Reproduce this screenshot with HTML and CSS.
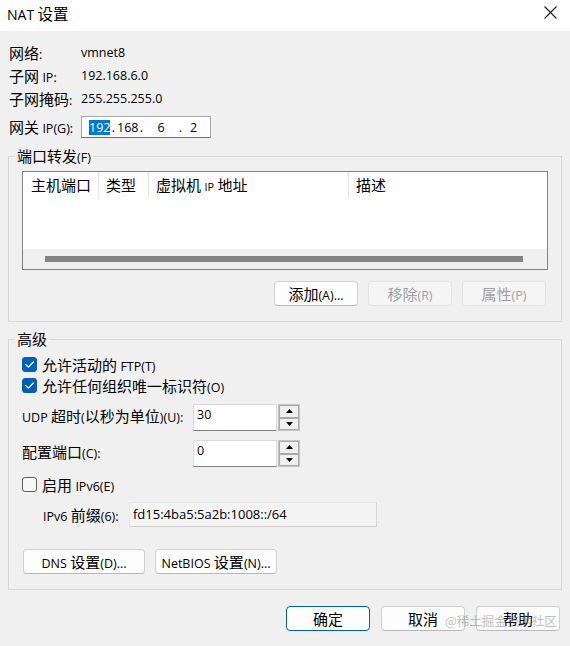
FILE: index.html
```html
<!DOCTYPE html>
<html lang="zh-CN">
<head>
<meta charset="utf-8">
<title>NAT 设置</title>
<link rel="stylesheet" href="styles.css">
</head>
<body>
<div class="window">
  <div class="titlebar">
    <div class="title"><span class="l tl">NAT</span> 设置</div>
    <svg class="close" width="13" height="13" viewBox="0 0 13 13"><path d="M0.5 0.5L12.5 12.5M12.5 0.5L0.5 12.5" stroke="#1a1a1a" stroke-width="1.1" fill="none"/></svg>
  </div>

  <div class="content">
    <div class="info">
      <div class="lab">网络<span class="l">:</span></div><div class="val l">vmnet8</div>
      <div class="lab">子网 <span class="l">IP:</span></div><div class="val l">192.168.6.0</div>
      <div class="lab">子网掩码<span class="l">:</span></div><div class="val l">255.255.255.0</div>
      <div class="lab ipl">网关 <span class="l">IP(G):</span></div>
      <div class="ipbox l">
        <span class="f1"><span class="sel">192</span></span><span class="dot">.</span><span class="f2">168</span><span class="dot">.</span><span class="f3">6</span><span class="dot">.</span><span class="f4">2</span>
      </div>
    </div>

    <fieldset class="group g1">
      <legend>端口转发<span class="l">(F)</span></legend>
      <div class="list">
        <div class="lhead">
          <div class="col c1">主机端口</div>
          <div class="col c2">类型</div>
          <div class="col c3">虚拟机 <span class="l ip">IP</span> 地址</div>
          <div class="col c4">描述</div>
        </div>
        <div class="lbody"></div>
        <div class="hscroll"><div class="thumb"></div></div>
      </div>
      <div class="btnrow">
        <div class="btn"><span>添加<span class="l">(A)...</span></span></div>
        <div class="btn dis"><span>移除<span class="l">(R)</span></span></div>
        <div class="btn dis"><span>属性<span class="l">(P)</span></span></div>
      </div>
    </fieldset>

    <fieldset class="group g2">
      <legend>高级</legend>
      <div class="chk first">
        <span class="cb on"><svg width="15" height="15" viewBox="0 0 15 15"><path d="M3.8 7.6L6.4 10.1L11.3 5" stroke="#fff" stroke-width="1.3" fill="none" stroke-linecap="round" stroke-linejoin="round"/></svg></span>
        <span>允许活动的 <span class="l">FTP(T)</span></span>
      </div>
      <div class="chk">
        <span class="cb on"><svg width="15" height="15" viewBox="0 0 15 15"><path d="M3.8 7.6L6.4 10.1L11.3 5" stroke="#fff" stroke-width="1.3" fill="none" stroke-linecap="round" stroke-linejoin="round"/></svg></span>
        <span>允许任何组织唯一标识符<span class="l">(O)</span></span>
      </div>

      <div class="frow udp">
        <div class="flbl"><span class="l">UDP</span> 超时<span class="l">(</span>以秒为单位<span class="l">)(U):</span></div>
        <div class="tbox l">30</div>
        <div class="spin">
          <div class="sbtn"><svg width="7" height="4" viewBox="0 0 7 4"><path d="M0 4L3.5 0L7 4Z" fill="#000"/></svg></div>
          <div class="sbtn"><svg width="7" height="4" viewBox="0 0 7 4"><path d="M0 0L3.5 4L7 0Z" fill="#000"/></svg></div>
        </div>
      </div>
      <div class="frow port">
        <div class="flbl">配置端口<span class="l">(C):</span></div>
        <div class="tbox l">0</div>
        <div class="spin">
          <div class="sbtn"><svg width="7" height="4" viewBox="0 0 7 4"><path d="M0 4L3.5 0L7 4Z" fill="#000"/></svg></div>
          <div class="sbtn"><svg width="7" height="4" viewBox="0 0 7 4"><path d="M0 0L3.5 4L7 0Z" fill="#000"/></svg></div>
        </div>
      </div>

      <div class="chk v6">
        <span class="cb"></span>
        <span>启用 <span class="l">IPv6(E)</span></span>
      </div>
      <div class="prow">
        <div class="plbl"><span class="l">IPv6</span> 前缀<span class="l">(6):</span></div>
        <div class="pbox l">fd15:4ba5:5a2b:1008::/64</div>
      </div>

      <div class="btnrow2">
        <div class="btn wide"><span><span class="l">DNS</span> 设置<span class="l">(D)...</span></span></div>
        <div class="btn wide"><span><span class="l">NetBIOS</span> 设置<span class="l">(N)...</span></span></div>
      </div>
    </fieldset>

    <div class="footer">
      <div class="btn def">确定</div>
      <div class="btn">取消</div>
      <div class="btn">帮助</div>
    </div>
  </div>

  <div class="watermark">@稀土掘金技术社区</div>
</div>
</body>
</html>
```

FILE: styles.css
```css
* { box-sizing: border-box; }
html, body { margin: 0; padding: 0; }
body {
  width: 570px;
  height: 646px;
  overflow: hidden;
  background: #f0f0f0;
  font-family: "Noto Sans CJK SC", sans-serif;
  font-size: 15px;
  color: #000;
}
.l {
  font-family: "Open Sans", "Noto Sans CJK SC", sans-serif;
  font-size: 12.5px;
  line-height: 1;
}
.window {
  position: relative;
  width: 570px;
  height: 646px;
  background: #f0f0f0;
}
.titlebar {
  height: 31px;
  background: #fff;
  display: flex;
  justify-content: space-between;
  align-items: flex-start;
  padding: 0 13px 0 7px;
}
.title {
  margin-top: 3px;
  line-height: 20px;
  height: 20px;
  font-size: 15.5px;
}
.title .tl { font-size: 14px; }
.close { margin-top: 6px; display: block; }

.content { padding: 10px 8px 0 8px; }

.info {
  display: grid;
  grid-template-columns: 72px auto;
  grid-template-rows: 23px 23px 23px 28px;
  align-items: center;
  padding-left: 1px;
  line-height: 20px;
}
.info .val { line-height: 20px; }
.ipl { align-self: end; line-height: 22px; height: 22px; }
.ipbox {
  align-self: end;
  width: 130px;
  height: 22px;
  background: #fff;
  border: 1px solid #a8a8a8;
  border-bottom-color: #6f6f6f;
  display: flex;
  align-items: center;
  padding-left: 7px;
  white-space: pre;
  line-height: 15px;
}
.ipbox .f1, .ipbox .f2 { width: 21px; display: inline-block; }
.ipbox .dot { width: 7px; text-align: center; display: inline-block; }
.ipbox .f3 { width: 32px; text-align: center; display: inline-block; }
.ipbox .f4 { padding-left: 6px; display: inline-block; }
.sel { background: #0078d7; color: #fff; display: inline-block; width: 21px; }

.group {
  margin: 9px 0 0 0;
  padding: 0 13px 15px 13px;
  border: 1px solid #d9d9d9;
  min-width: 0;
}
.group legend {
  margin-left: -7px;
  padding: 0 2px;
  line-height: 18px;
  height: 18px;
  font-size: 15px;
}
.g2 { margin-top: 8px; }

.list {
  margin-top: 6px;
  border: 1px solid #828282;
  background: #fff;
  height: 99px;
  display: flex;
  flex-direction: column;
}
.lhead {
  height: 27px;
  display: flex;
  line-height: 26px;
}
.col {
  padding-left: 7px;
  border-right: 1px solid #e5e5e5;
  white-space: nowrap;
  height: 26px;
}
.col.c1 { width: 76px; padding-left: 8px; }
.col.c2 { width: 50px; }
.col.c3 { width: 200px; }
.col.c4 { flex: 1; border-right: none; }
.col .ip { font-size: 11px; }
.lbody { flex: 1; }
.hscroll {
  height: 20px;
  background: #f0f0f0;
  padding: 7px 24px 0 22px;
}
.thumb { height: 6px; background: #858585; }

.btn {
  width: 84px;
  height: 25px;
  background: #fdfdfd;
  border: 1px solid #d0d0d0;
  border-bottom-color: #b8b8b8;
  border-radius: 4px;
  display: flex;
  align-items: center;
  justify-content: center;
  line-height: 20px;
  white-space: nowrap;
}
.btn.dis {
  background: #f5f5f5;
  border-color: #e3e3e3;
  color: #a0a0a0;
}
.btn.def { border: 1px solid #005fb8; }
.btnrow {
  display: flex;
  justify-content: flex-end;
  gap: 10px;
  margin-top: 11px;
  margin-right: 2px;
}

.chk {
  display: flex;
  align-items: center;
  gap: 5px;
  height: 21px;
  line-height: 20px;
}
.chk.first { margin-top: 6px; }
.chk.v6 { margin-top: 7px; }
.cb {
  width: 15px;
  height: 15px;
  border-radius: 3px;
  border: 1px solid #5f5f5f;
  background: #f7f7f7;
  display: block;
}
.cb.on { background: #005fb8; border-color: #005fb8; }
.cb.on svg { display: block; margin: -1px; }

.frow {
  display: flex;
  align-items: center;
  height: 27px;
  line-height: 20px;
}
.frow.udp { margin-top: 8px; }
.frow.port { margin-top: 9px; }
.flbl { width: 171px; white-space: nowrap; margin-top: -3px; }
.tbox {
  width: 84px;
  height: 27px;
  background: #fff;
  border: 1px solid #dadada;
  border-bottom-color: #7f7f7f;
  padding: 1px 0 0 3px;
  line-height: 18px;
  font-size: 12.5px;
}
.spin {
  width: 22px;
  height: 27px;
  margin-left: 1px;
  display: flex;
  flex-direction: column;
  border: 1px solid #c4c4c4;
  background: #f0f0f0;
}
.sbtn {
  flex: 1;
  border: 1px solid #a9a9a9;
  display: flex;
  align-items: center;
  justify-content: center;
}
.sbtn svg { display: block; }

.prow {
  margin-top: 7px;
  display: flex;
  align-items: center;
  padding-left: 21px;
  height: 25px;
  line-height: 20px;
}
.plbl { width: 86px; white-space: nowrap; }
.pbox {
  width: 248px;
  height: 25px;
  background: #f4f4f4;
  border: 1px solid #e6e6e6;
  border-bottom-color: #cfcfcf;
  border-right-color: #d4d4d4;
  padding: 2px 0 0 3px;
  line-height: 18px;
  font-size: 13px;
}

.btnrow2 {
  display: flex;
  gap: 10px;
  margin-top: 22px;
  margin-left: 1px;
}
.btn.wide { width: 122px; }

.footer {
  display: flex;
  justify-content: flex-end;
  gap: 11px;
  margin-top: 16px;
  margin-right: 2px;
}

.watermark {
  position: absolute;
  left: 445px;
  top: 612px;
  font-size: 12.5px;
  line-height: 18px;
  color: rgba(110, 110, 110, 0.45);
  white-space: nowrap;
}
```
